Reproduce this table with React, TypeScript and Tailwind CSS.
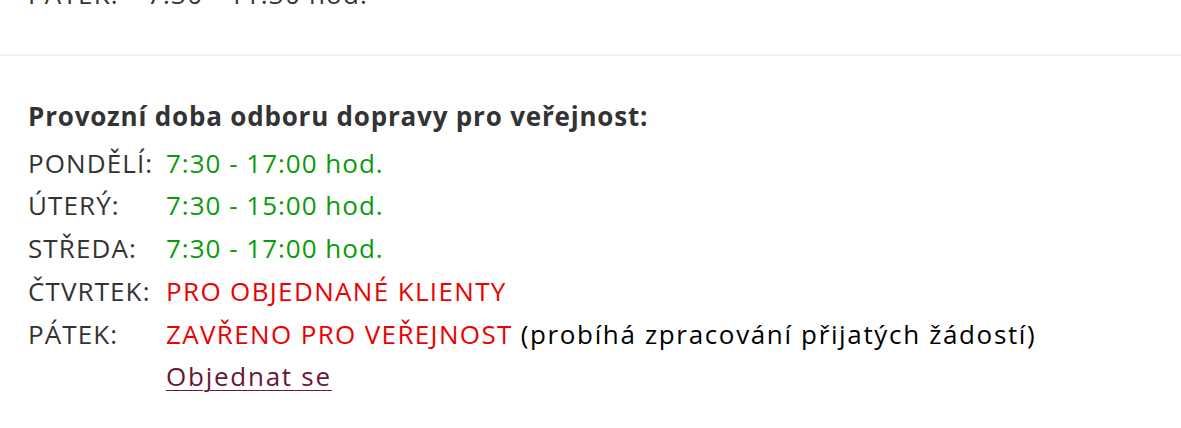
import React from "react";

type Row = { day: string; value: React.ReactNode };

const rows: Row[] = [
  { day: "PONDĚLÍ:", value: <span className="tracking-[1px] text-[#0a9a0a]">7:30 - 17:00 hod.</span> },
  { day: "ÚTERÝ:", value: <span className="tracking-[1px] text-[#0a9a0a]">7:30 - 15:00 hod.</span> },
  { day: "STŘEDA:", value: <span className="tracking-[1px] text-[#0a9a0a]">7:30 - 17:00 hod.</span> },
  { day: "ČTVRTEK:", value: <span className="tracking-[1.35px] text-[#ec0000]">PRO OBJEDNANÉ KLIENTY</span> },
  {
    day: "PÁTEK:",
    value: (
      <>
        <span className="tracking-[1.35px] text-[#ec0000]">ZAVŘENO PRO VEŘEJNOST</span>{" "}
        <span className="tracking-[1.65px] text-black">
          (probíhá zpracování přijatých žádostí)
        </span>
      </>
    ),
  },
];

const App: React.FC = () => {
  return (
    <main
      className="h-[428px] w-full overflow-hidden bg-white text-[26px] leading-[42.75px] tracking-[1.2px] text-[#333]"
      style={{ fontFamily: '"Open Sans", "Noto Sans", sans-serif' }}
    >
      {/* end of the previous block, cut off by the viewport */}
      <section className="border-b-2 border-[#efefef] px-[28px] pb-[38px]">
        <div className="-mt-[27px] grid grid-cols-[119px_1fr]">
          <span>PÁTEK:</span>
          <span>7:30 - 11:30 hod.</span>
        </div>
      </section>

      <section className="px-[28px] pt-[39px]">
        <h2 className="mb-[4px] font-bold tracking-[0.8px] text-[#333]">
          Provozní doba odboru dopravy pro veřejnost:
        </h2>
        <div className="grid grid-cols-[138px_1fr]">
          {rows.map((r) => (
            <React.Fragment key={r.day}>
              <span className="whitespace-nowrap tracking-[1.1px]">{r.day}</span>
              <span className="whitespace-nowrap">{r.value}</span>
            </React.Fragment>
          ))}
          <span />
          <a
            href="#"
            className="w-fit tracking-[1.75px] text-[#6b1538] underline decoration-1 underline-offset-4"
          >
            Objednat se
          </a>
        </div>
      </section>
    </main>
  );
};

export default App;
